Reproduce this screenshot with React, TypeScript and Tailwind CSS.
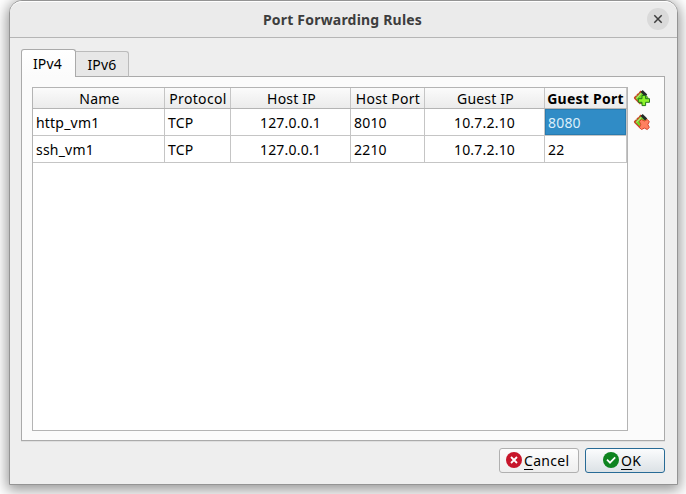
import type { ReactNode } from "react";

const grid = "grid grid-cols-[132px_66px_120px_74px_120px_82px]";

const rows = [
  ["http_vm1", "TCP", "127.0.0.1", "8010", "10.7.2.10", "8080"],
  ["ssh_vm1", "TCP", "127.0.0.1", "2210", "10.7.2.10", "22"],
];

const headers = [
  { label: "Name", cls: "pl-[2px] tracking-[0.2px]" },
  { label: "Protocol", cls: "pl-px tracking-[0.35px]" },
  { label: "Host IP", cls: "pl-[2px] tracking-[0.2px]" },
  { label: "Host Port", cls: "pl-px tracking-[0.25px]" },
  { label: "Guest IP", cls: "pl-[2px] tracking-[0.2px]" },
  { label: "Guest Port", cls: "font-bold tracking-[0.25px]" },
];

function RuleIcon({ children }: { children: ReactNode }) {
  return (
    <svg width="18" height="18" viewBox="0 0 18 18" className="block">
      <path d="M1.5 9 8.5 2 15 8.5 8 15Z" fill="#70d923" stroke="#467b18" strokeWidth="0.8" />
      <path d="M1.3 9 8.3 2" stroke="#d44326" strokeWidth="1.6" strokeDasharray="2.8 .7" />
      <path d="M1.3 9 7.3 15" stroke="#ce482c" strokeWidth="1.2" />
      <path d="M3.4 9.2 8.5 4.1" stroke="#e9d8a0" strokeWidth="1" />
      <path d="m8.6 2 4.6 4.6" stroke="#252b29" strokeWidth="3" />
      {children}
    </svg>
  );
}

export default function App() {
  return (
    <div className="h-[494px] w-[686px] overflow-hidden bg-white pl-[9px] font-['Noto_Sans',sans-serif] text-[14px] tracking-[0.2px] text-black">
      <div className="flex h-[485px] w-[669px] flex-col rounded-t-[13px] border border-[#949494] bg-[#eeeeee] shadow-[0_3px_14px_2px_rgba(0,0,0,0.42)]">
        <header className="grid h-[37px] shrink-0 grid-cols-[40px_1fr_40px] items-center rounded-t-[12px] border-t border-b border-t-white border-b-[#b5b5b5] bg-[#ebebeb]">
          <span />
          <h1 className="pr-[2px] text-center text-[14px] leading-[20px] font-bold text-[#3d3d3d]">Port Forwarding Rules</h1>
          <button aria-label="Close" className="mb-[2px] ml-[10px] flex size-[22px] items-center justify-center rounded-full bg-[#dadada]">
            <svg width="10" height="10" viewBox="0 0 10 10">
              <path d="m1.3 1.3 7.4 7.4m0-7.4L1.3 8.7" stroke="#3d3d3d" strokeWidth="1.5" />
            </svg>
          </button>
        </header>

        <main className="w-[655px] pt-[11px] pl-[11px]">
          <nav className="relative z-10 flex h-[28px] items-end">
            <button className="h-[28px] w-[55px] rounded-t-[3px] border border-b-0 border-[#aaaaaa] bg-gradient-to-b from-white to-[#fbfbfb] pr-[2px] leading-[20px]">IPv4</button>
            <button className="h-[26px] w-[53px] rounded-tr-[3px] border border-b-[#aaaaaa] border-l-0 border-[#bbbbbb] bg-[#e7e7e7] pt-[2px] leading-[20px]">IPv6</button>
          </nav>
          <section className="-mt-px flex h-[365px] w-[644px] border border-[#aaaaaa] bg-[#fbfbfb] pt-[10px] pl-[10px] shadow-[0_1px_0_#dfdfdf]">
            <div className="h-[344px] w-[596px] border border-[#b4b4b4] bg-white">
              <div className={`${grid} h-[21px] border-b border-[#b4b4b4] bg-gradient-to-b from-[#fbfbfb] to-[#ebebeb]`}>
                {headers.map((h) => (
                  <div key={h.label} className={`flex h-[20px] items-center justify-center border-r border-[#c5c5c5] pt-[2px] leading-[20px] whitespace-nowrap ${h.cls}`}>
                    {h.label}
                  </div>
                ))}
              </div>
              {rows.map((row, r) => (
                <div key={row[0]} className={`${grid} h-[27px]`}>
                  {row.map((value, c) => (
                    <div
                      key={c}
                      className={`flex items-center border-r border-b border-[#c5c5c5] pt-[2px] leading-[20px] ${c === 2 || c === 4 ? "justify-center" : "pl-[3px]"} ${r === 0 && c === 5 ? "bg-[#308cc6] text-[#dceefa] shadow-[inset_0_0_0_1px_#287bb0]" : ""}`}
                    >
                      {value}
                    </div>
                  ))}
                </div>
              ))}
            </div>
            <aside className="ml-[5px] flex flex-col gap-[6px] pt-[2px]">
              <button aria-label="Add rule">
                <RuleIcon>
                  <path d="M9 6.5h3.6v3.2h3.9v3.6h-3.9v3.3H9v-3.3H5.3V9.7H9Z" fill="#8df42b" stroke="#237719" />
                </RuleIcon>
              </button>
              <button aria-label="Remove rule">
                <RuleIcon>
                  <path d="m8.5 6.5 2.9 1.5 2.8-1.5 2.1 2-1.4 3 1.4 3-2.1 2-2.8-1.4-2.9 1.4-2.1-2 1.4-3-1.4-3Z" fill="#ff8060" stroke="#d8432b" />
                </RuleIcon>
              </button>
            </aside>
          </section>
          <footer className="flex justify-end gap-[6px] pt-[7px]">
            <button className="flex h-[25px] w-[80px] items-center gap-[2px] rounded-[3px] border border-[#b0b0b0] bg-gradient-to-b from-[#fdfdfd] to-[#eeeeee] pl-[6px] leading-[20px]">
              <svg width="16" height="16" viewBox="0 0 16 16" className="mb-px">
                <circle cx="8" cy="8" r="8" fill="#c7162b" />
                <path d="m5 5 6 6m0-6-6 6" stroke="white" strokeWidth="1.8" />
              </svg>
              <span className="tracking-[0.3px]"><span className="underline decoration-1 underline-offset-[3px]">C</span>ancel</span>
            </button>
            <button className="flex h-[25px] w-[80px] items-center gap-[2px] rounded-[3px] border border-[#286b96] bg-gradient-to-b from-[#fbfcfd] to-[#dce2e6] pl-[17px] leading-[20px]">
              <svg width="16" height="16" viewBox="0 0 16 16" className="mb-px">
                <circle cx="8" cy="8" r="8" fill="#0e8420" />
                <path d="m4 7.7 3 3L12.2 5.4" fill="none" stroke="white" strokeWidth="1.7" />
              </svg>
              <span><span className="underline decoration-1 underline-offset-[3px]">O</span>K</span>
            </button>
          </footer>
        </main>
      </div>
    </div>
  );
}
